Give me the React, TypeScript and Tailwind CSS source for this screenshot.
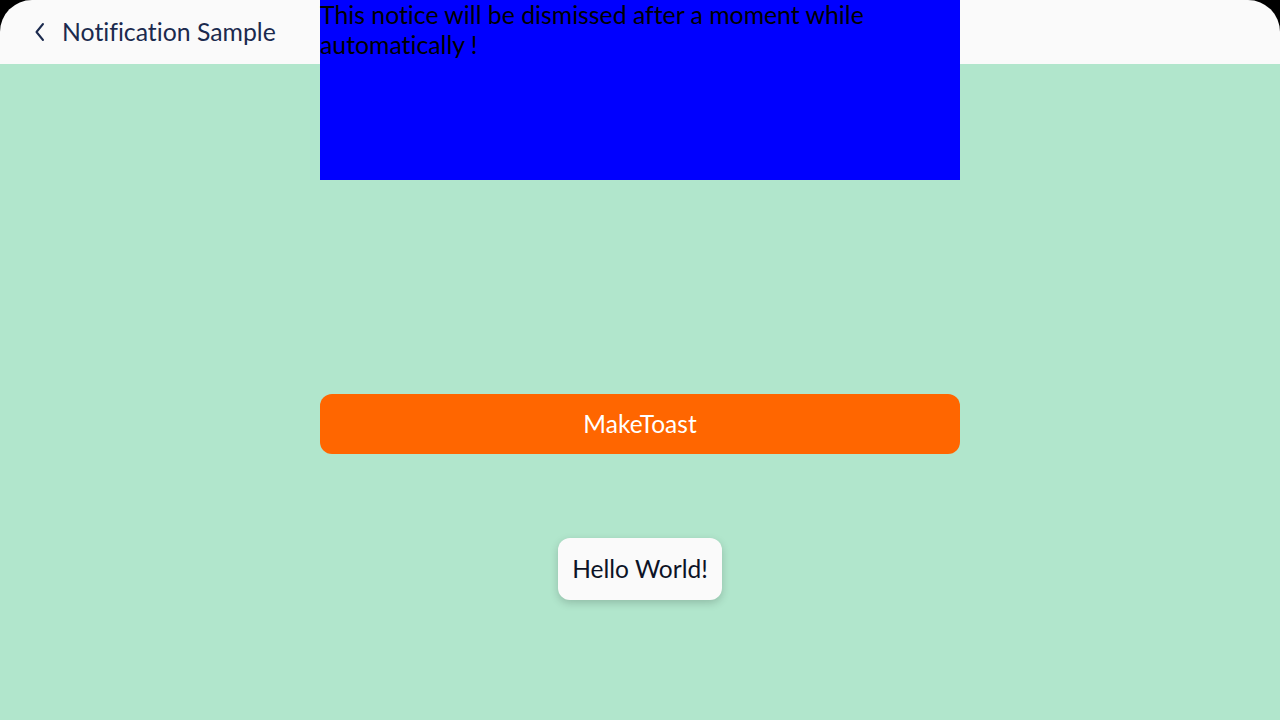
import React from "react";

export default function App() {
  return (
    <div className="relative w-[1280px] h-[720px] bg-black overflow-hidden [font-variant-ligatures:none]" style={{ fontFamily: "Lato, 'Noto Sans', sans-serif" }}>
      <div className="flex flex-col w-full h-full">
        <header className="h-[64px] bg-[#fafafa] rounded-t-[32px] flex items-center pl-[29px] gap-[11px] shrink-0">
          <svg width="22" height="22" viewBox="0 0 22 22" fill="none" stroke="#1b2a4e" strokeWidth="2" strokeLinecap="round" strokeLinejoin="round">
            <path d="M14 3 L7.5 11 L14 19" />
          </svg>
          <span className="text-[24.8px] text-[#1b2a4e] leading-none">Notification Sample</span>
        </header>
        <main className="flex-1 bg-[#b1e6cc] flex flex-col items-center pt-[330px]">
          <button className="w-[640px] h-[60px] rounded-[12px] bg-[#ff6600] text-white text-[24.5px] flex items-center justify-center">
            MakeToast
          </button>
          <div className="mt-[84px] h-[62px] px-[14px] rounded-[12px] bg-[#fafafa] shadow-[0_3px_8px_rgba(0,0,0,0.18)] flex items-center text-[24.5px] text-[#0d1326]">
            Hello World!
          </div>
        </main>
      </div>
      <div className="absolute left-[320px] top-0 w-[640px] h-[180px] bg-[#0000ff] text-black text-[24.8px] leading-[30px]">
        This notice will be dismissed after a moment while automatically !
      </div>
    </div>
  );
}
